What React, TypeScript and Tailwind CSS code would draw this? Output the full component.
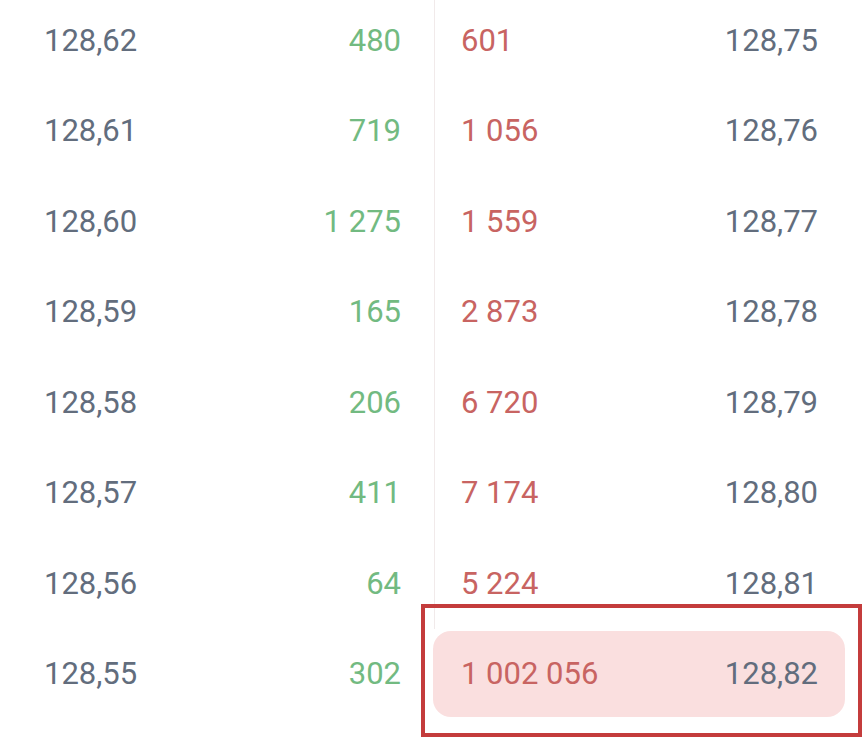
type Row = { bid: string; bidVol: string; askVol: string; ask: string };

const rows: Row[] = [
  { bid: "128,62", bidVol: "480", askVol: "601", ask: "128,75" },
  { bid: "128,61", bidVol: "719", askVol: "1 056", ask: "128,76" },
  { bid: "128,60", bidVol: "1 275", askVol: "1 559", ask: "128,77" },
  { bid: "128,59", bidVol: "165", askVol: "2 873", ask: "128,78" },
  { bid: "128,58", bidVol: "206", askVol: "6 720", ask: "128,79" },
  { bid: "128,57", bidVol: "411", askVol: "7 174", ask: "128,80" },
  { bid: "128,56", bidVol: "64", askVol: "5 224", ask: "128,81" },
  { bid: "128,55", bidVol: "302", askVol: "1 002 056", ask: "128,82" },
];

export default function App() {
  return (
    <div
      className="relative h-[753px] w-[863px] overflow-hidden bg-white text-[31px] leading-none"
      style={{ fontFamily: "Roboto, 'Liberation Sans', sans-serif" }}
    >
      <div className="-mt-[5px] flex flex-col">
        {rows.map((r, i) => {
          const last = i === rows.length - 1;
          return (
            <div key={r.bid} className="flex h-[90.5px]">
              {/* bids */}
              <div className="flex w-[434px] items-center justify-between pl-[44px] pr-[33px]">
                <span className="text-[#626d7d]">{r.bid}</span>
                <span className="text-[#72ba81]">{r.bidVol}</span>
              </div>
              {/* asks */}
              {last ? (
                <div className="-ml-[1px] flex flex-1 items-center py-[2px] pr-[18px]">
                  <div className="flex h-full flex-1 items-center justify-between rounded-[18px] bg-[#fadfdf] pl-[28px] pr-[27px]">
                    <span className="text-[#c86462]">{r.askVol}</span>
                    <span className="text-[#626d7d]">{r.ask}</span>
                  </div>
                </div>
              ) : (
                <div className="flex flex-1 items-center justify-between border-l border-[#f1eaea] pl-[26px] pr-[45px]">
                  <span className="text-[#c86462]">{r.askVol}</span>
                  <span className="text-[#626d7d]">{r.ask}</span>
                </div>
              )}
            </div>
          );
        })}
      </div>
      {/* annotation frame */}
      <div className="pointer-events-none absolute left-[421px] top-[604px] h-[133px] w-[441px] border-4 border-[#c43c3c]" />
    </div>
  );
}
